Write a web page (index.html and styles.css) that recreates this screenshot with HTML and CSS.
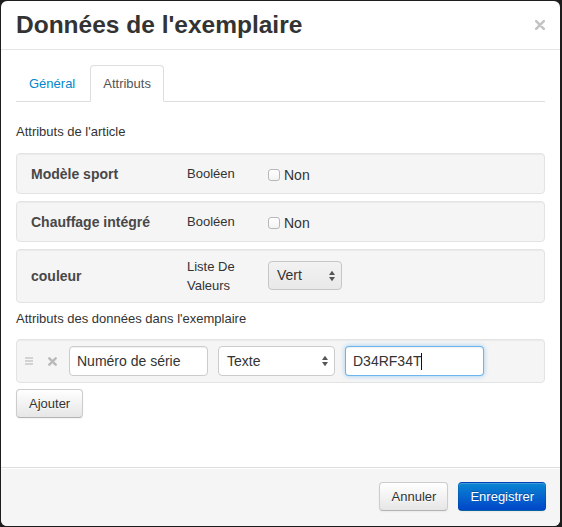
FILE: index.html
```html
<!DOCTYPE html>
<html lang="fr">
<head>
<meta charset="utf-8">
<title>Données de l'exemplaire</title>
<link rel="stylesheet" href="styles.css">
</head>
<body>
<div class="modal">
  <div class="modal-header">
    <h3 class="modal-title">Données de l'exemplaire</h3>
    <span class="close" aria-label="Fermer">
      <svg width="10" height="10" viewBox="0 0 10 10"><path d="M1.2 1.2 L8.8 8.8 M8.8 1.2 L1.2 8.8" stroke="#c4c4c4" stroke-width="2.6" stroke-linecap="round"/></svg>
    </span>
  </div>
  <div class="modal-body">
    <ul class="tabs">
      <li class="tab"><a class="tab-link">Général</a></li>
      <li class="tab active"><a class="tab-link">Attributs</a></li>
    </ul>
    <p class="section-label">Attributs de l'article</p>
    <div class="attr-list">
      <div class="well attr-row">
        <div class="attr-name">Modèle sport</div>
        <div class="attr-type">Booléen</div>
        <div class="attr-value"><span class="checkbox"></span><span class="check-label">Non</span></div>
      </div>
      <div class="well attr-row">
        <div class="attr-name">Chauffage intégré</div>
        <div class="attr-type">Booléen</div>
        <div class="attr-value"><span class="checkbox"></span><span class="check-label">Non</span></div>
      </div>
      <div class="well attr-row">
        <div class="attr-name">couleur</div>
        <div class="attr-type">Liste De Valeurs</div>
        <div class="attr-value">
          <div class="select select-gray">Vert
            <svg class="select-arrows" width="6" height="12" viewBox="0 0 6 12"><path d="M0 5 L3 0.8 L6 5 Z M0 7 L6 7 L3 11.2 Z" fill="#555"/></svg>
          </div>
        </div>
      </div>
    </div>
    <p class="section-label second">Attributs des données dans l'exemplaire</p>
    <div class="well data-row">
      <svg class="handle" width="8" height="8" viewBox="0 0 8 8"><path d="M0 1 H8 M0 4 H8 M0 7 H8" stroke="#c8c8c8" stroke-width="1.4"/></svg>
      <svg class="remove" width="9" height="9" viewBox="0 0 9 9"><path d="M1.3 1.3 L7.7 7.7 M7.7 1.3 L1.3 7.7" stroke="#b9b9b9" stroke-width="2.4" stroke-linecap="round"/></svg>
      <div class="control input-name">Numéro de série</div>
      <div class="control select select-type">Texte
        <svg class="select-arrows" width="6" height="12" viewBox="0 0 6 12"><path d="M0 5 L3 0.8 L6 5 Z M0 7 L6 7 L3 11.2 Z" fill="#555"/></svg>
      </div>
      <div class="control input-value focused">D34RF34T<span class="caret"></span></div>
    </div>
    <button class="btn btn-add">Ajouter</button>
  </div>
  <div class="modal-footer">
    <button class="btn btn-cancel">Annuler</button>
    <button class="btn btn-primary">Enregistrer</button>
  </div>
</div>
</body>
</html>
```
FILE: styles.css
```css
* { box-sizing: border-box; }

html, body {
  margin: 0;
  padding: 0;
  background: #1d1d1d;
}

body {
  font-family: "Liberation Sans", Arial, sans-serif;
  font-size: 13px;
  color: #333;
}

.modal {
  margin: 1px 0 0 1px;
  width: 559px;
  height: 525px;
  background: #fff;
  border-radius: 6px;
  display: flex;
  flex-direction: column;
  overflow: hidden;
}

.modal-header {
  height: 49px;
  padding: 9px 15px;
  border-bottom: 1px solid #e5e5e5;
  display: flex;
  align-items: center;
  justify-content: space-between;
}

.modal-title {
  margin: 0;
  font-size: 24.5px;
  line-height: 30px;
  font-weight: bold;
  color: #333;
}

.close {
  display: flex;
  width: 10px;
  height: 10px;
  margin-right: 0;
}

.modal-body {
  flex: 1;
  padding: 15px;
}

.tabs {
  list-style: none;
  margin: 0 0 20px;
  padding: 0;
  display: flex;
  border-bottom: 1px solid #ddd;
}

.tab {
  margin-bottom: -1px;
  margin-right: 2px;
}

.tab-link {
  display: block;
  padding: 8px 12px;
  line-height: 19px;
  border: 1px solid transparent;
  border-radius: 4px 4px 0 0;
  color: #0088cc;
  font-size: 13px;
}

.tab.active .tab-link {
  color: #555;
  background: #fff;
  border-color: #ddd #ddd transparent;
}

.section-label {
  margin: 0 0 11px;
  line-height: 20px;
  font-size: 13px;
  color: #333;
}

.section-label.second {
  margin: 6px 0 10px;
}

.well {
  background: #f5f5f5;
  border: 1px solid #e3e3e3;
  border-radius: 4px;
  box-shadow: inset 0 1px 1px rgba(0, 0, 0, 0.04);
}

.attr-list {
  display: flex;
  flex-direction: column;
  gap: 7px;
}

.attr-row {
  display: flex;
  align-items: center;
  padding: 7px 14px;
  min-height: 41px;
}

.attr-name {
  width: 156px;
  font-size: 14px;
  font-weight: bold;
  color: #484848;
  line-height: 20px;
}

.attr-type {
  width: 81px;
  padding-right: 10px;
  line-height: 19px;
  font-size: 13px;
  color: #333;
}

.attr-value {
  display: flex;
  align-items: center;
  line-height: 20px;
  padding-top: 2px;
}

.checkbox {
  width: 12px;
  height: 12px;
  border: 1px solid #b8b8b8;
  border-radius: 3px;
  background: linear-gradient(#fff, #f3f3f3);
  margin-right: 4px;
}

.check-label {
  font-size: 14px;
  color: #333;
}

.select {
  position: relative;
  display: flex;
  align-items: center;
  font-size: 14px;
  color: #333;
  border: 1px solid #c6c6c6;
  border-radius: 4px;
}

.select-arrows {
  position: absolute;
  right: 6px;
  top: 50%;
  margin-top: -6px;
}

.select-gray {
  width: 74px;
  height: 29px;
  margin-top: -3px;
  padding: 0 8px;
  background: linear-gradient(#f2f2f2, #e9e9e9);
  line-height: 18px;
  padding-bottom: 2px;
}

.data-row {
  display: flex;
  align-items: center;
  padding: 6px 8px;
  height: 44px;
}

.handle {
  margin-right: 15px;
}

.remove {
  margin-right: 12px;
}

.control {
  height: 30px;
  border: 1px solid #ccc;
  border-radius: 4px;
  background: #fff;
  font-size: 14px;
  color: #333;
  line-height: 28px;
  padding: 0 7px;
  box-shadow: inset 0 1px 1px rgba(0, 0, 0, 0.06);
  white-space: nowrap;
}

.input-name {
  width: 139px;
  margin-right: 10px;
}

.select-type {
  width: 117px;
  margin-right: 10px;
  padding: 0 8px;
  box-shadow: none;
}

.input-value {
  width: 139px;
}

.focused {
  border-color: rgba(82, 168, 236, 0.85);
  box-shadow: inset 0 1px 1px rgba(0, 0, 0, 0.06), 0 0 5px rgba(82, 168, 236, 0.55);
}

.caret {
  display: inline-block;
  width: 1px;
  height: 17px;
  background: #111;
  vertical-align: -4px;
}

.btn {
  display: inline-block;
  font-family: "Liberation Sans", Arial, sans-serif;
  font-size: 13px;
  line-height: 19px;
  padding: 4px 12px;
  color: #333;
  text-shadow: 0 1px 1px rgba(255, 255, 255, 0.75);
  background: linear-gradient(#fff, #e6e6e6);
  border: 1px solid #ccc;
  border-bottom-color: #b3b3b3;
  border-radius: 4px;
  box-shadow: inset 0 1px 0 rgba(255, 255, 255, 0.2), 0 1px 2px rgba(0, 0, 0, 0.05);
  cursor: pointer;
}

.btn-add {
  margin-top: 6px;
}

.btn-cancel {
  padding: 4px 11px 4px 12px;
}

.btn-primary {
  padding: 4px 11px;
  color: #fff;
  text-shadow: 0 -1px 0 rgba(0, 0, 0, 0.25);
  background: linear-gradient(#0a86d2, #0046c9);
  border-color: rgba(0, 0, 0, 0.1) rgba(0, 0, 0, 0.1) rgba(0, 0, 0, 0.25);
}

.modal-footer {
  height: 59px;
  padding: 14px 14px 15px;
  background: #f5f5f5;
  border-top: 1px solid #ddd;
  box-shadow: inset 0 1px 0 #fff;
  display: flex;
  justify-content: flex-end;
  align-items: flex-start;
  gap: 10px;
}
```
